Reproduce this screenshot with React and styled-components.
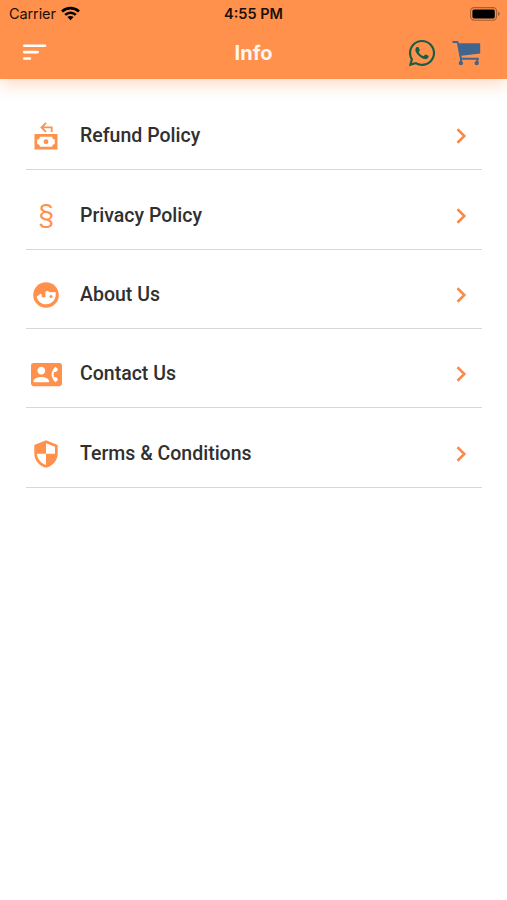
import {MdContactPhone} from 'react-icons/md';
import {FaWhatsapp} from 'react-icons/fa';
import styled, {createGlobalStyle} from 'styled-components';

const items = [
	{label: 'Refund Policy', icon: <RefundIcon />},
	{label: 'Privacy Policy', icon: <SectionIcon />},
	{label: 'About Us', icon: <FaceIcon />},
	{label: 'Contact Us', icon: <MdContactPhone size={31} />},
	{label: 'Terms & Conditions', icon: <ShieldIcon />},
];

export default function App() {
	return (
		<>
			<GlobalStyle />
			<Screen>
				<Header>
					<StatusBar>
						<Carrier>
							Carrier
							<WifiIcon />
						</Carrier>
						<Time>4:55 PM</Time>
						<BatterySlot>
							<BatteryIcon />
						</BatterySlot>
					</StatusBar>
					<NavBar>
						<MenuButton aria-label="Menu">
							<MenuIcon />
						</MenuButton>
						<Title>Info</Title>
						<Actions>
							<FaWhatsapp size={30} color="#185d45" />
							<CartIcon />
						</Actions>
					</NavBar>
				</Header>
				<List>
					{items.map(item => (
						<Row key={item.label}>
							<IconSlot>{item.icon}</IconSlot>
							<Label>{item.label}</Label>
							<Chevron />
						</Row>
					))}
				</List>
			</Screen>
		</>
	);
}

function WifiIcon() {
	return (
		<svg width="19" height="15" viewBox="0 0 19 15">
			<g fill="none" stroke="#000" strokeWidth="2.7">
				<path d="M1 5.4C5.8.9 13.2.9 18 5.4" />
				<path d="M4.2 8.9c3-2.9 7.6-2.9 10.6 0" />
			</g>
			<path d="M6.4 11.1c1.8-1.6 4.4-1.6 6.2 0L9.5 14.2z" />
		</svg>
	);
}

function BatteryIcon() {
	return (
		<svg width="31" height="14" viewBox="0 0 31 14">
			<rect x="0.6" y="0.6" width="26" height="12.6" rx="3.6" fill="none" stroke="#a85f34" strokeWidth="1.1" />
			<rect x="2.4" y="2.4" width="22.4" height="9" rx="1.6" />
			<path d="M28 4.8c2.3.7 2.3 3.5 0 4.2z" fill="#a85f34" />
		</svg>
	);
}

function MenuIcon() {
	return (
		<svg width="24" height="17" viewBox="0 0 24 17" stroke="#fff" strokeWidth="2.6" strokeLinecap="round">
			<path d="M1.3 1.7h20.8M1.3 8.1h13.4M1.3 14.5h5.6" />
		</svg>
	);
}

function CartIcon() {
	return (
		<svg width="30" height="26" viewBox="0 0 30 26" fill="#41658f">
			<path d="M.5 1h5c.6 0 .9.3 1 .8l.3 1.4h21.4v10.4L9.4 15.8l.4 2h16.9v2H8.1L4.9 3.1H.5z" />
			<path d="M8 18h2v5H8zM24.3 18h2v5h-2z" />
			<circle cx="8.9" cy="23.1" r="2.2" />
			<circle cx="24.7" cy="23.1" r="2.2" />
		</svg>
	);
}

function RefundIcon() {
	return (
		<svg width="24" height="28" viewBox="0 0 24 28">
			<path d="M7.5 5.4h10.2V10M12 1L7.5 5.4l4.5 4.4" fill="none" stroke="currentColor" strokeWidth="1.8" />
			<path
				fill="currentColor"
				fillRule="evenodd"
				d="M.5 12h23v15.5H.5zM6 14.8a3 3 0 0 1-2.8 2.8v4.3A3 3 0 0 1 6 24.7h12a3 3 0 0 1 2.8-2.8v-4.3a3 3 0 0 1-2.8-2.8z"
			/>
			<circle cx="12" cy="19.7" r="2.4" fill="currentColor" />
		</svg>
	);
}

function SectionIcon() {
	return <Section>§</Section>;
}

function FaceIcon() {
	return (
		<svg width="26" height="26" viewBox="0 0 26 26">
			<circle cx="13" cy="13" r="12.8" fill="currentColor" />
			<path
				fill="#fff"
				d="M3.8 14.2c1.6-.3 2.7-1.2 3.4-2.7l1.6 1.2v2.5h3.6V9.8l2.4-1 2 1.4 5.7-.1c1.4 6.2-2.9 12.2-9.3 12.2-5.1 0-9-3.5-9.4-8.1z"
			/>
			<circle cx="18" cy="14.5" r="1.5" fill="currentColor" />
		</svg>
	);
}

function ShieldIcon() {
	return (
		<svg width="24" height="28" viewBox="0 0 24 28">
			<path
				fill="currentColor"
				fillRule="evenodd"
				d="M12 .3L23.7 5v8.5c0 6.5-4.8 12.6-11.7 14.2C5.1 26.1.3 20 .3 13.5V5zM12 3.2v10.6H3c.4 5.4 4 9.8 9 11.2V13.8h9v-7z"
			/>
		</svg>
	);
}

function Chevron() {
	return (
		<svg width="11" height="16" viewBox="0 0 11 16" fill="none" stroke="#f68b4e" strokeWidth="2.6">
			<path d="M1.5 1.3L8.3 8l-6.8 6.7" />
		</svg>
	);
}

// #################################
// ########   STYLING    ###########
// #################################

const GlobalStyle = createGlobalStyle`
	* {
		box-sizing: border-box;
	}

	body {
		margin: 0;
		background: #fff;
	}

	svg {
		display: block;
		flex-shrink: 0;
	}
`;

const Screen = styled.div`
	height: 900px;
	background: #fff;
	font-family: Roboto, sans-serif;
`;

const Header = styled.header`
	height: 79px;
	background: #ff914d;
	box-shadow: 0 5px 16px rgba(255, 145, 77, 0.35);
`;

const StatusBar = styled.div`
	height: 27px;
	padding: 0 6px 0 9px;

	display: grid;
	grid-template-columns: 1fr auto 1fr;
	align-items: center;

	font-family: Inter, sans-serif;
	font-size: 14.5px;
	color: #1c0f08;
`;

const Carrier = styled.div`
	display: flex;
	align-items: center;
	gap: 5px;

	letter-spacing: -0.1px;
`;

const Time = styled.div`
	padding-right: 3px;
	font-weight: 600;
`;

const BatterySlot = styled.div`
	display: flex;
	justify-content: flex-end;
`;

const NavBar = styled.nav`
	height: 52px;
	padding: 0 25px 0 23px;

	display: grid;
	grid-template-columns: 1fr auto 1fr;
	align-items: center;
`;

const MenuButton = styled.button`
	padding: 0 0 2px;
	border: 0;
	background: none;
`;

const Title = styled.h1`
	margin: 0 0 1px;
	padding-left: 2px;
	font-family: Inter, sans-serif;
	font-size: 20px;
	font-weight: 700;
	color: #fff6ef;
`;

const Actions = styled.div`
	display: flex;
	justify-content: flex-end;
	align-items: center;
	gap: 15px;
`;

const List = styled.ul`
	margin: 0;
	padding: 12px 25px 0 26px;
	list-style: none;
`;

const Row = styled.li`
	height: 79.35px;
	padding: 12px 15px 0 0;
	border-bottom: 1px solid #d8d8d8;

	display: flex;
	align-items: center;
`;

const IconSlot = styled.div`
	width: 40px;
	margin-right: 14px;

	display: flex;
	justify-content: center;

	color: #ff914d;
`;

const Section = styled.span`
	font-family: 'Liberation Sans', sans-serif;
	font-size: 29px;
	line-height: 32px;
`;

const Label = styled.span`
	flex: 1;
	padding-bottom: 1px;
	font-size: 19.5px;
	font-weight: 500;
	color: #303030;
`;
